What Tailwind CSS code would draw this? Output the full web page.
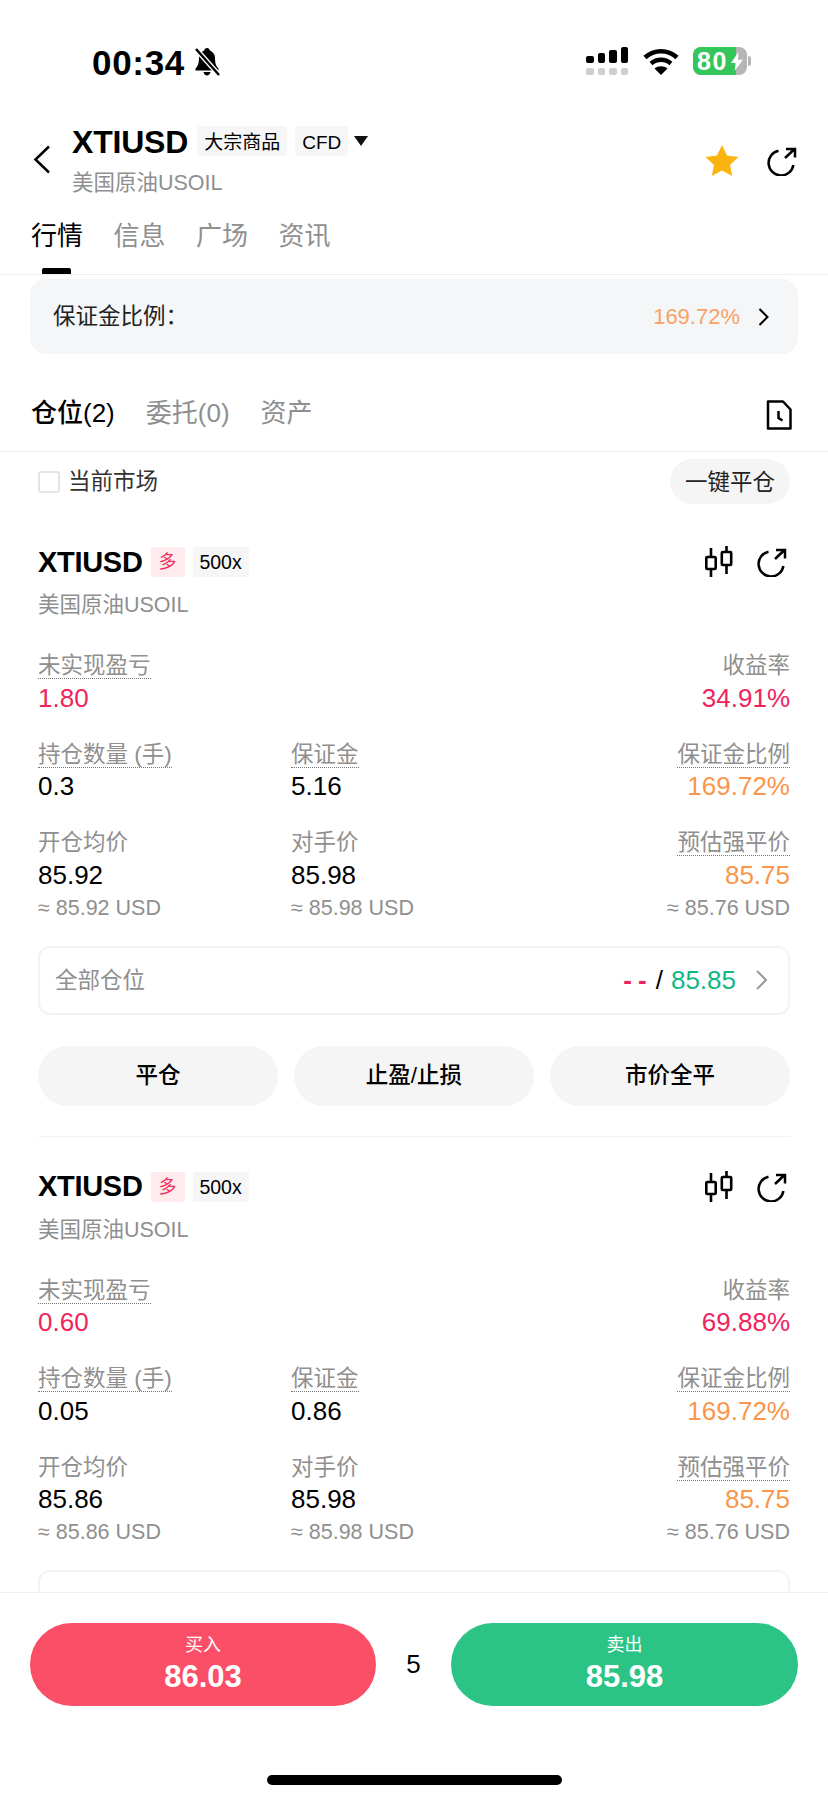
<!DOCTYPE html>
<html lang="zh-CN">
<head>
  <meta charset="UTF-8">
  <meta name="viewport" content="width=device-width, initial-scale=1.0">
  <title>XTIUSD</title>
  <script src="https://cdn.jsdelivr.net/npm/@tailwindcss/browser@4"></script>
</head>
<body class="bg-white text-black font-['Liberation_Sans','Noto_Sans_CJK_SC',sans-serif]">
  <div class="w-[828px] h-[1800px] flex flex-col overflow-hidden">

    <!-- status bar -->
    <div class="h-[124px] shrink-0 flex items-center pl-[92px] pr-[77px]">
      <span class="text-[35px] leading-none font-bold tracking-[0.7px]">00:34</span>
      <svg class="ml-[8px] w-[28px] h-[30px]" viewBox="0 0 28 30" fill="#000"><path d="M14 1c-1.6 0-2.6 1-2.8 2.4C7.8 4.600 6 7.500 6 11c0 5-.8 7.500-3.500 10.500V23.500h23V21.500C22.800 18.500 22 16 22 11c0-3.500-1.800-6.400-5.200-7.600C16.600 2 15.600 1 14 1zM10.500 25c.4 2 1.800 3.500 3.500 3.500s3.100-1.500 3.500-3.500z"/><path d="M3 2l23 26" stroke="#fff" stroke-width="5"/><path d="M3 2l23 26" stroke="#000" stroke-width="2.500"/></svg>
      <div class="ml-auto -mt-[2px] flex items-center">
        <div class="flex flex-col gap-[5px]">
          <div class="flex items-end gap-[4px]">
            <i class="block w-[7.500px] h-[7px] bg-black rounded-[2px]"></i>
            <i class="block w-[7.500px] h-[10px] bg-black rounded-[2px]"></i>
            <i class="block w-[7.500px] h-[13px] bg-black rounded-[2px]"></i>
            <i class="block w-[7.500px] h-[16px] bg-black rounded-[2px]"></i>
          </div>
          <div class="flex gap-[4px]">
            <i class="block w-[7.500px] h-[7px] bg-[#cfcfcf] rounded-[2px]"></i>
            <i class="block w-[7.500px] h-[7px] bg-[#cfcfcf] rounded-[2px]"></i>
            <i class="block w-[7.500px] h-[7px] bg-[#cfcfcf] rounded-[2px]"></i>
            <i class="block w-[7.500px] h-[7px] bg-[#cfcfcf] rounded-[2px]"></i>
          </div>
        </div>
        <svg class="ml-[15px] w-[36px] h-[27px]" viewBox="0 0 36 27" fill="none" stroke="#000" stroke-width="4.500"><path d="M2 9.500c9-8.500 23-8.500 32 0"/><path d="M8 15.500c5.800-5 14.200-5 20 0"/><path d="M18 27l-6.500-6.500c3.600-3 9.400-3 13 0z" fill="#000" stroke="none"/></svg>
        <div class="ml-[14px] relative w-[54px] h-[28px] rounded-[8px] overflow-hidden bg-[#b5b5b5]">
          <div class="w-[43px] h-full bg-[#34c65a] pl-[4px] text-white text-[25px] tracking-[1.500px] leading-[28px] font-bold">80</div>
          <svg class="absolute left-[38px] top-[5px] w-[12px] h-[19px]" viewBox="0 0 13 20" fill="#fff"><path d="M8 0L0 11.500h5L4 20l9-12H7.500z"/></svg>
        </div>
        <i class="block ml-[1px] w-[3px] h-[10px] rounded-r-full bg-[#b5b5b5]"></i>
      </div>
    </div>

    <!-- instrument header -->
    <div class="h-[81px] shrink-0 flex pl-[33px] pr-[31px]">
      <svg class="mt-[21px] w-[18px] h-[29px]" viewBox="0 0 18 29" fill="none" stroke="#000" stroke-width="2.500"><path d="M16 1.500L2.500 14.500 16 27.500"/></svg>
      <div class="ml-[21px]">
        <div class="flex items-center h-[30px] mt-[2px]">
          <span class="mt-[2px] text-[32px] leading-none font-bold tracking-[-0.2px]">XTIUSD</span>
          <span class="ml-[9px] h-[30px] px-[7px] bg-[#f6f6f6] rounded-[3px] text-[19px] leading-[33px]">大宗商品</span>
          <span class="ml-[8px] h-[30px] px-[7px] bg-[#f6f6f6] rounded-[3px] text-[19px] leading-[33px]">CFD</span>
          <svg class="ml-[6px] w-[14px] h-[10px]" viewBox="0 0 14 10" fill="#111"><path d="M0 0h14L7 10z"/></svg>
        </div>
        <div class="mt-[12px] h-[30px] text-[21.500px] leading-[30px] text-[#8f8f8f]">美国原油USOIL</div>
      </div>
      <svg class="ml-auto mt-[21px] w-[34px] h-[31px]" viewBox="0 0 34 31" fill="#fbb40f"><path d="M17 0l5 10.500 11.500 1.500-8.500 8 2.200 11L17 25.500 6.800 31 9 20 .5 12 12 10.500z"/></svg>
      <svg class="ml-[28px] mt-[22px] w-[30px] h-[30px]" viewBox="0 0 30 30" fill="none" stroke="#000" stroke-width="2.500"><path d="M11.500 4.700A12.500 12.500 0 1 0 26.400 19"/><path d="M18 12L27.500 3M19 3h9v8.500"/></svg>
    </div>

    <!-- top tabs -->
    <div class="h-[70px] shrink-0 border-b border-[#f0f0f0] relative pl-[31px] pt-[16px] flex gap-[30.500px] text-[26px] leading-[30px] text-[#8f8f8f]">
      <span class="text-black">行情</span><span>信息</span><span>广场</span><span>资讯</span>
      <div class="absolute left-[42px] bottom-0 w-[29px] h-[6px] bg-black rounded-t-[2px]"></div>
    </div>

    <!-- scrolling content -->
    <div class="flex-1 min-h-0 overflow-hidden">
      <div class="mx-[30px] mt-[4px] h-[75px] rounded-[16px] bg-[#f4f6f7] flex items-center pl-[23px] pr-[29px] text-[22.500px]">
        <span class="text-[#222]">保证金比例：</span>
        <span class="ml-auto text-[22px] text-[#f8a268]">169.72%</span>
        <svg class="ml-[18px] w-[11px] h-[18px]" viewBox="0 0 11 18" fill="none" stroke="#000" stroke-width="2"><path d="M1.500 1l8 8-8 8"/></svg>
      </div>

      <div class="h-[98px] border-b border-[#f0f0f0] flex items-center pl-[31px] pr-[36px] pt-[21px] text-[26px] text-[#8f8f8f]">
        <span class="text-black font-medium">仓位(2)</span>
        <span class="ml-[31px]">委托(0)</span>
        <span class="ml-[31px]">资产</span>
        <svg class="ml-auto mt-[4px] w-[26px] h-[30px]" viewBox="0 0 26 30" fill="none" stroke="#000" stroke-width="2.500"><path d="M2 1.500h15l7.500 8v19H2z" stroke-linejoin="round"/><path d="M12.500 11v7l4 2.500"/></svg>
      </div>

      <div class="flex items-center pl-[38px] pr-[38px] pt-[7px] pb-[9px]">
        <span class="w-[22px] h-[22px] rounded-[3px] border-2 border-[#e4e4e4]"></span>
        <span class="ml-[8px] text-[22.500px] text-[#333]">当前市场</span>
        <span class="ml-auto w-[120px] h-[45px] rounded-full bg-[#f5f5f5] text-center text-[22.500px] leading-[47px] text-[#222]">一键平仓</span>
      </div>

      <!-- position 1 -->
      <div class="mx-[38px] pt-[34px] border-b border-[#f3f3f3] pb-[30px]">
        <div class="flex items-center h-[30px]">
          <span class="text-[29px] font-bold leading-none tracking-[-0.3px]">XTIUSD</span>
          <span class="ml-[8px] w-[34px] h-[30px] bg-[#ffebee] rounded-[2px] text-center text-[18px] leading-[30px] text-[#f0305c]">多</span>
          <span class="ml-[8px] w-[56px] h-[30px] bg-[#f6f6f6] rounded-[2px] text-center text-[19.500px] leading-[30px]">500x</span>
          <svg class="ml-auto w-[32px] h-[32px]" viewBox="0 0 32 32" fill="none" stroke="#000" stroke-width="2.600"><path d="M7 2v9M7 23v8M22.500 0v6M22.500 19v9"/><rect x="2.300" y="11" width="9.400" height="12" rx="1"/><rect x="17.800" y="6" width="9.400" height="13" rx="1"/></svg>
          <svg class="ml-[21px] mr-[3px] w-[30px] h-[30px]" viewBox="0 0 30 30" fill="none" stroke="#000" stroke-width="2.500"><path d="M11.500 4.700A12.500 12.500 0 1 0 26.400 19"/><path d="M18 12L27.500 3M19 3h9v8.500"/></svg>
        </div>
        <div class="mt-[13px] h-[30px] text-[21.500px] leading-[30px] text-[#8f8f8f]">美国原油USOIL</div>

        <div class="mt-[31px] grid grid-cols-[253px_253px_1fr] text-[22.500px] text-[#8f8f8f]">
          <div class="h-[88.500px]"><div class="h-[28px] leading-[30px] w-fit border-b border-dotted border-[#777]">未实现盈亏</div><div class="mt-[2.500px] h-[32px] leading-[32px] text-[26px] text-[#f0245c]">1.80</div></div>
          <div></div>
          <div class="text-right"><div class="h-[28px] leading-[30px] ml-auto w-fit">收益率</div><div class="mt-[2.500px] h-[32px] leading-[32px] text-[26px] text-[#f0245c]">34.91%</div></div>

          <div class="h-[88.500px]"><div class="h-[28px] leading-[30px] w-fit border-b border-dotted border-[#777]">持仓数量 (手)</div><div class="mt-[2.500px] h-[32px] leading-[32px] text-[26px] text-black">0.3</div></div>
          <div><div class="h-[28px] leading-[30px] w-fit border-b border-dotted border-[#777]">保证金</div><div class="mt-[2.500px] h-[32px] leading-[32px] text-[26px] text-black">5.16</div></div>
          <div class="text-right"><div class="h-[28px] leading-[30px] ml-auto w-fit border-b border-dotted border-[#777]">保证金比例</div><div class="mt-[2.500px] h-[32px] leading-[32px] text-[26px] text-[#f9964a]">169.72%</div></div>

          <div><div class="h-[28px] leading-[30px]">开仓均价</div><div class="mt-[2.500px] h-[32px] leading-[32px] text-[26px] text-black">85.92</div><div class="mt-[2px] h-[30px] leading-[30px] text-[21.500px]">≈ 85.92 USD</div></div>
          <div><div class="h-[28px] leading-[30px]">对手价</div><div class="mt-[2.500px] h-[32px] leading-[32px] text-[26px] text-black">85.98</div><div class="mt-[2px] h-[30px] leading-[30px] text-[21.500px]">≈ 85.98 USD</div></div>
          <div class="text-right"><div class="h-[28px] leading-[30px] ml-auto w-fit border-b border-dotted border-[#777]">预估强平价</div><div class="mt-[2.500px] h-[32px] leading-[32px] text-[26px] text-[#f9964a]">85.75</div><div class="mt-[2px] h-[30px] leading-[30px] text-[21.500px]">≈ 85.76 USD</div></div>
        </div>

        <div class="mt-[23px] h-[69px] rounded-[12px] border-2 border-[#f3f3f3] flex items-center pl-[15px] pr-[21px] text-[22.500px]">
          <span class="pt-[2px] text-[#8f8f8f]">全部仓位</span>
          <span class="ml-auto text-[26px] text-[#f0245c] font-bold tracking-[6px]">--</span>
          <span class="ml-[3px] text-[26px]">/</span>
          <span class="ml-[8px] text-[26px] text-[#10b981]">85.85</span>
          <svg class="ml-[20px] w-[11px] h-[20px]" viewBox="0 0 11 20" fill="none" stroke="#999" stroke-width="2"><path d="M1 1l9 9-9 9"/></svg>
        </div>

        <div class="mt-[31px] flex gap-[16px] text-[22.500px] font-medium text-center">
          <span class="flex-1 h-[60px] leading-[60px] rounded-full bg-[#f5f5f5]">平仓</span>
          <span class="flex-1 h-[60px] leading-[60px] rounded-full bg-[#f5f5f5]">止盈/止损</span>
          <span class="flex-1 h-[60px] leading-[60px] rounded-full bg-[#f5f5f5]">市价全平</span>
        </div>
      </div>

      <!-- position 2 -->
      <div class="mx-[38px] pt-[35px]">
        <div class="flex items-center h-[30px]">
          <span class="text-[29px] font-bold leading-none tracking-[-0.3px]">XTIUSD</span>
          <span class="ml-[8px] w-[34px] h-[30px] bg-[#ffebee] rounded-[2px] text-center text-[18px] leading-[30px] text-[#f0305c]">多</span>
          <span class="ml-[8px] w-[56px] h-[30px] bg-[#f6f6f6] rounded-[2px] text-center text-[19.500px] leading-[30px]">500x</span>
          <svg class="ml-auto w-[32px] h-[32px]" viewBox="0 0 32 32" fill="none" stroke="#000" stroke-width="2.600"><path d="M7 2v9M7 23v8M22.500 0v6M22.500 19v9"/><rect x="2.300" y="11" width="9.400" height="12" rx="1"/><rect x="17.800" y="6" width="9.400" height="13" rx="1"/></svg>
          <svg class="ml-[21px] mr-[3px] w-[30px] h-[30px]" viewBox="0 0 30 30" fill="none" stroke="#000" stroke-width="2.500"><path d="M11.500 4.700A12.500 12.500 0 1 0 26.400 19"/><path d="M18 12L27.500 3M19 3h9v8.500"/></svg>
        </div>
        <div class="mt-[13px] h-[30px] text-[21.500px] leading-[30px] text-[#8f8f8f]">美国原油USOIL</div>

        <div class="mt-[31px] grid grid-cols-[253px_253px_1fr] text-[22.500px] text-[#8f8f8f]">
          <div class="h-[88.500px]"><div class="h-[28px] leading-[30px] w-fit border-b border-dotted border-[#777]">未实现盈亏</div><div class="mt-[2.500px] h-[32px] leading-[32px] text-[26px] text-[#f0245c]">0.60</div></div>
          <div></div>
          <div class="text-right"><div class="h-[28px] leading-[30px] ml-auto w-fit">收益率</div><div class="mt-[2.500px] h-[32px] leading-[32px] text-[26px] text-[#f0245c]">69.88%</div></div>

          <div class="h-[88.500px]"><div class="h-[28px] leading-[30px] w-fit border-b border-dotted border-[#777]">持仓数量 (手)</div><div class="mt-[2.500px] h-[32px] leading-[32px] text-[26px] text-black">0.05</div></div>
          <div><div class="h-[28px] leading-[30px] w-fit border-b border-dotted border-[#777]">保证金</div><div class="mt-[2.500px] h-[32px] leading-[32px] text-[26px] text-black">0.86</div></div>
          <div class="text-right"><div class="h-[28px] leading-[30px] ml-auto w-fit border-b border-dotted border-[#777]">保证金比例</div><div class="mt-[2.500px] h-[32px] leading-[32px] text-[26px] text-[#f9964a]">169.72%</div></div>

          <div><div class="h-[28px] leading-[30px]">开仓均价</div><div class="mt-[2.500px] h-[32px] leading-[32px] text-[26px] text-black">85.86</div><div class="mt-[2px] h-[30px] leading-[30px] text-[21.500px]">≈ 85.86 USD</div></div>
          <div><div class="h-[28px] leading-[30px]">对手价</div><div class="mt-[2.500px] h-[32px] leading-[32px] text-[26px] text-black">85.98</div><div class="mt-[2px] h-[30px] leading-[30px] text-[21.500px]">≈ 85.98 USD</div></div>
          <div class="text-right"><div class="h-[28px] leading-[30px] ml-auto w-fit border-b border-dotted border-[#777]">预估强平价</div><div class="mt-[2.500px] h-[32px] leading-[32px] text-[26px] text-[#f9964a]">85.75</div><div class="mt-[2px] h-[30px] leading-[30px] text-[21.500px]">≈ 85.76 USD</div></div>
        </div>

        <div class="mt-[23px] h-[69px] rounded-[12px] border-2 border-[#f3f3f3]"></div>
      </div>
    </div>

    <!-- order bar -->
    <div class="h-[208px] shrink-0 bg-white border-t border-[#f0f0f0] relative pt-[30px] px-[30px]">
      <div class="flex items-center">
        <div class="w-[346px] h-[83px] rounded-full bg-[#fb4f67] text-white text-center pt-[10px]">
          <div class="text-[18px] leading-[24px]">买入</div>
          <div class="mt-[2px] text-[31px] leading-[36px] font-bold">86.03</div>
        </div>
        <div class="flex-1 text-center text-[26px]">5</div>
        <div class="w-[347px] h-[83px] rounded-full bg-[#2cc486] text-white text-center pt-[10px]">
          <div class="text-[18px] leading-[24px]">卖出</div>
          <div class="mt-[2px] text-[31px] leading-[36px] font-bold">85.98</div>
        </div>
      </div>
      <div class="absolute left-[267px] bottom-[15px] w-[295px] h-[10px] rounded-full bg-black"></div>
    </div>
  </div>
</body>
</html>
